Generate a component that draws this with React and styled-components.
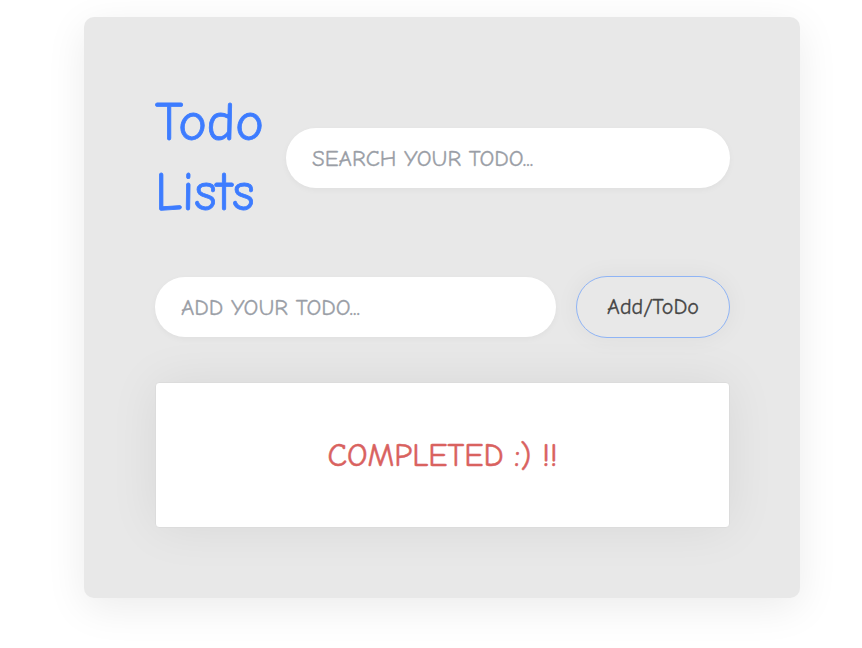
import React from "react";
import styled, { createGlobalStyle } from "styled-components";

const GlobalStyle = createGlobalStyle`
    body {
        margin: 0;
        background: #ffffff;
        font-family: "Comic Sans MS", "Comic Neue", "Noto Sans", sans-serif;
    }
`;

const Page = styled.div`
    padding: 17px 0 0 84px;
    min-height: 648px;
    box-sizing: border-box;
`;

const Card = styled.div`
    width: 716px;
    box-sizing: border-box;
    padding: 71px 70px 70px 71px;
    background: #e8e8e8;
    border-radius: 10px;
    box-shadow: 0 10px 40px rgba(0, 0, 0, 0.08);
    display: flex;
    flex-direction: column;
`;

const Header = styled.div`
    display: flex;
    align-items: center;
    gap: 22px;
`;

const Title = styled.h1`
    margin: 0;
    width: 109px;
    font-size: 54px;
    font-weight: 400;
    -webkit-text-stroke: 0.8px #3d7cff;
    line-height: 70px;
    color: #3d7cff;
`;

const TextInput = styled.input`
    flex: 1;
    height: 60px;
    box-sizing: border-box;
    padding: 0 26px;
    border: none;
    border-radius: 30px;
    background: #ffffff;
    font-family: inherit;
    font-size: 23px;
    font-weight: 400;
    color: #444;
    outline: none;
    box-shadow: 0 2px 6px rgba(0, 0, 0, 0.04);

    &::placeholder {
        color: #9a9ea6;
        -webkit-text-stroke: 0.3px #9a9ea6;
    }
`;

const AddRow = styled.div`
    display: flex;
    align-items: center;
    gap: 20px;
    margin-top: 48px;
`;

const AddButton = styled.button`
    width: 154px;
    height: 62px;
    border: 1px solid #8fb4f5;
    border-radius: 31px;
    background: #e8e8e8;
    font-family: inherit;
    font-size: 22px;
    font-weight: 400;
    -webkit-text-stroke: 0.3px #454545;
    color: #454545;
    cursor: pointer;
    box-shadow: 0 0 24px rgba(0, 0, 0, 0.05);
`;

const StatusBox = styled.div`
    margin-top: 44px;
    height: 146px;
    box-sizing: border-box;
    display: flex;
    align-items: center;
    justify-content: center;
    background: #ffffff;
    border: 1px solid #dcdcdc;
    border-radius: 4px;
    box-shadow: 0 0 50px rgba(0, 0, 0, 0.07);
`;

const StatusText = styled.p`
    margin: 0;
    font-size: 32px;
    font-weight: 400;
    -webkit-text-stroke: 0.5px #d9625f;
    color: #d9625f;
`;

const App = () => {
    return (
        <>
            <GlobalStyle />
            <Page>
                <Card>
                    <Header>
                        <Title>Todo Lists</Title>
                        <TextInput placeholder="SEARCH YOUR TODO..." />
                    </Header>
                    <AddRow>
                        <TextInput placeholder="ADD YOUR TODO..." />
                        <AddButton>Add/ToDo</AddButton>
                    </AddRow>
                    <StatusBox>
                        <StatusText>COMPLETED :) !!</StatusText>
                    </StatusBox>
                </Card>
            </Page>
        </>
    );
};

export default App;
